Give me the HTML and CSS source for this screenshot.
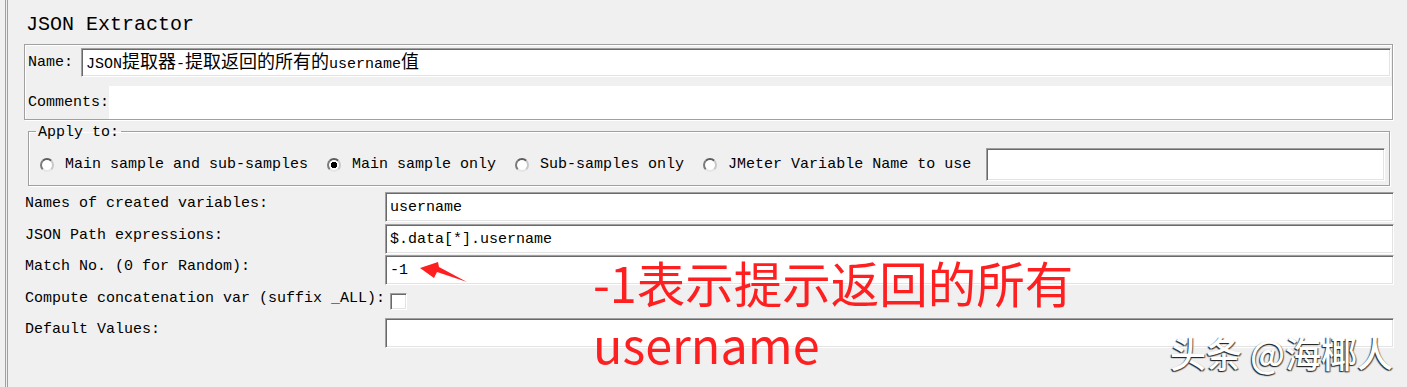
FILE: index.html
```html
<!DOCTYPE html>
<html lang="zh-CN">
<head>
    <meta charset="UTF-8">
    <title>JSON Extractor</title>
    <link rel="stylesheet" href="styles.css">
</head>
<body>
    <div class="panel">
        <div class="title">JSON Extractor</div>

        <div class="name-box">
            <div class="name-row">
                <span class="label">Name:</span>
                <div class="field name-field">JSON<span class="cjk">提取器</span>-<span class="cjk">提取返回的所有的</span>username<span class="cjk">值</span></div>
            </div>
            <div class="comments-row">
                <span class="label">Comments:</span>
                <div class="comments-area"></div>
            </div>
        </div>

        <fieldset class="apply">
            <legend>Apply to:</legend>
            <label class="radio"><span class="dot"></span>Main sample and sub-samples</label>
            <label class="radio"><span class="dot checked"></span>Main sample only</label>
            <label class="radio"><span class="dot"></span>Sub-samples only</label>
            <label class="radio"><span class="dot"></span>JMeter Variable Name to use</label>
            <div class="field var-field"></div>
        </fieldset>

        <div class="form">
            <div class="label">Names of created variables:</div>
            <div class="field">username</div>
            <div class="label">JSON Path expressions:</div>
            <div class="field">$.data[*].username</div>
            <div class="label">Match No. (0 for Random):</div>
            <div class="field">-1</div>
            <div class="label">Compute concatenation var (suffix _ALL):</div>
            <div class="check-cell"><span class="checkbox"></span></div>
            <div class="label">Default Values:</div>
            <div class="field"></div>
        </div>
    </div>

    <!-- пометки поверх скриншота -->
    <svg class="arrow" width="60" height="30" viewBox="0 0 60 30">
        <polygon points="5,10 23,4 24,9 52,24 22,14 19,20" fill="#fe2020"/>
    </svg>
    <div class="note">-1表示提示返回的所有<br>username</div>
    <div class="watermark">头条 @海椰人</div>
</body>
</html>
```

FILE: styles.css
```css
body {
    margin: 0;
    background: #f0f0f0;
    font-family: "Liberation Mono", "Noto Sans CJK SC", monospace;
    font-size: 15px;
    color: #000;
    height: 387px;
    overflow: hidden;
    position: relative;
}
.panel {
    margin-left: 5px;
    border-left: 3px double #a0a0a0;
    padding: 13px 13px 0 16px;
    height: 387px;
    box-sizing: border-box;
}
.title {
    font-size: 20px;
    line-height: 24px;
    padding-left: 2px;
    margin-bottom: 7px;
}
.field {
    background: #fff;
    border: 1px solid;
    border-color: #a0a0a0 #fff #fff #a0a0a0;
    box-shadow: inset 1px 1px 0 #696969, inset -1px -1px 0 #e3e3e3;
    box-sizing: border-box;
    height: 30px;
    line-height: 30px;
    padding-left: 4px;
    white-space: nowrap;
    overflow: hidden;
}
.cjk {
    font-size: 18px;
}

/* Name / Comments */
.name-box {
    border: 1px solid #a0a0a0;
    box-shadow: inset 1px 1px 0 #fff, 1px 1px 0 #fff;
    margin-right: 1px;
    padding-top: 3px;
}
.name-row {
    display: flex;
    align-items: center;
    height: 29px;
}
.name-row .label {
    padding-left: 3px;
    margin-right: 8px;
}
.name-field {
    flex: 1;
    height: 29px;
    line-height: 29px;
    margin-right: 1px;
}
.comments-row {
    display: flex;
    align-items: center;
    margin-top: 9px;
    height: 33px;
    line-height: 36px;
}
.comments-row .label {
    padding-left: 3px;
}
.comments-area {
    flex: 1;
    height: 33px;
    background: #fff;
}

/* Apply to */
.apply {
    display: flex;
    align-items: center;
    margin: 2px 4px 0 4px;
    padding: 8px 4px 4px 7px;
    border: 1px solid #a0a0a0;
    box-shadow: inset 1px 1px 0 #fff, 1px 1px 0 #fff;
    min-width: 0;
}
.apply legend {
    padding: 0 2px;
    line-height: 18px;
    position: relative;
    top: 2px;
}
.radio {
    display: flex;
    align-items: center;
    margin-left: 19px;
    white-space: nowrap;
    height: 33px;
    line-height: 35px;
}
.radio:first-of-type {
    margin-left: 4px;
}
.dot {
    width: 14px;
    height: 14px;
    box-sizing: border-box;
    border-radius: 50%;
    border: 2px solid;
    border-color: #5e5e5e #c8c8c8 #e6e6e6 #7a7a7a;
    background: #fff;
    margin-right: 11px;
}
.dot.checked {
    background: radial-gradient(circle, #000 0 3px, #fff 3.5px);
}
.var-field {
    flex: 1;
    height: 33px;
    margin-left: 15px;
}

/* нижняя форма */
.form {
    display: grid;
    grid-template-columns: 361px 1fr;
    grid-auto-rows: 30px;
    row-gap: 1.5px;
    margin-top: 6px;
}
.form .label {
    padding-left: 1px;
    line-height: 24px;
    white-space: nowrap;
}
.check-cell {
    display: flex;
    align-items: center;
}
.checkbox {
    width: 17px;
    height: 17px;
    box-sizing: border-box;
    margin-left: 5px;
    background: #fff;
    border: 1px solid;
    border-color: #a0a0a0 #fff #fff #a0a0a0;
    box-shadow: inset 1px 1px 0 #696969, inset -1px -1px 0 #e3e3e3;
}

/* аннотации */
.arrow {
    position: absolute;
    left: 415px;
    top: 258px;
}
.note {
    position: absolute;
    left: 593px;
    top: 252px;
    font-family: "Noto Sans CJK SC", sans-serif;
    font-size: 48.5px;
    line-height: 61px;
    color: #fe2020;
    white-space: nowrap;
}
.watermark {
    position: absolute;
    left: 1170px;
    top: 334px;
    font-family: "Noto Sans CJK SC", sans-serif;
    font-size: 36px;
    font-weight: 500;
    line-height: 36px;
    color: #fff;
    text-shadow: -1px 1px 1px #222, 1px 1px 1px #555;
    white-space: nowrap;
}
```
